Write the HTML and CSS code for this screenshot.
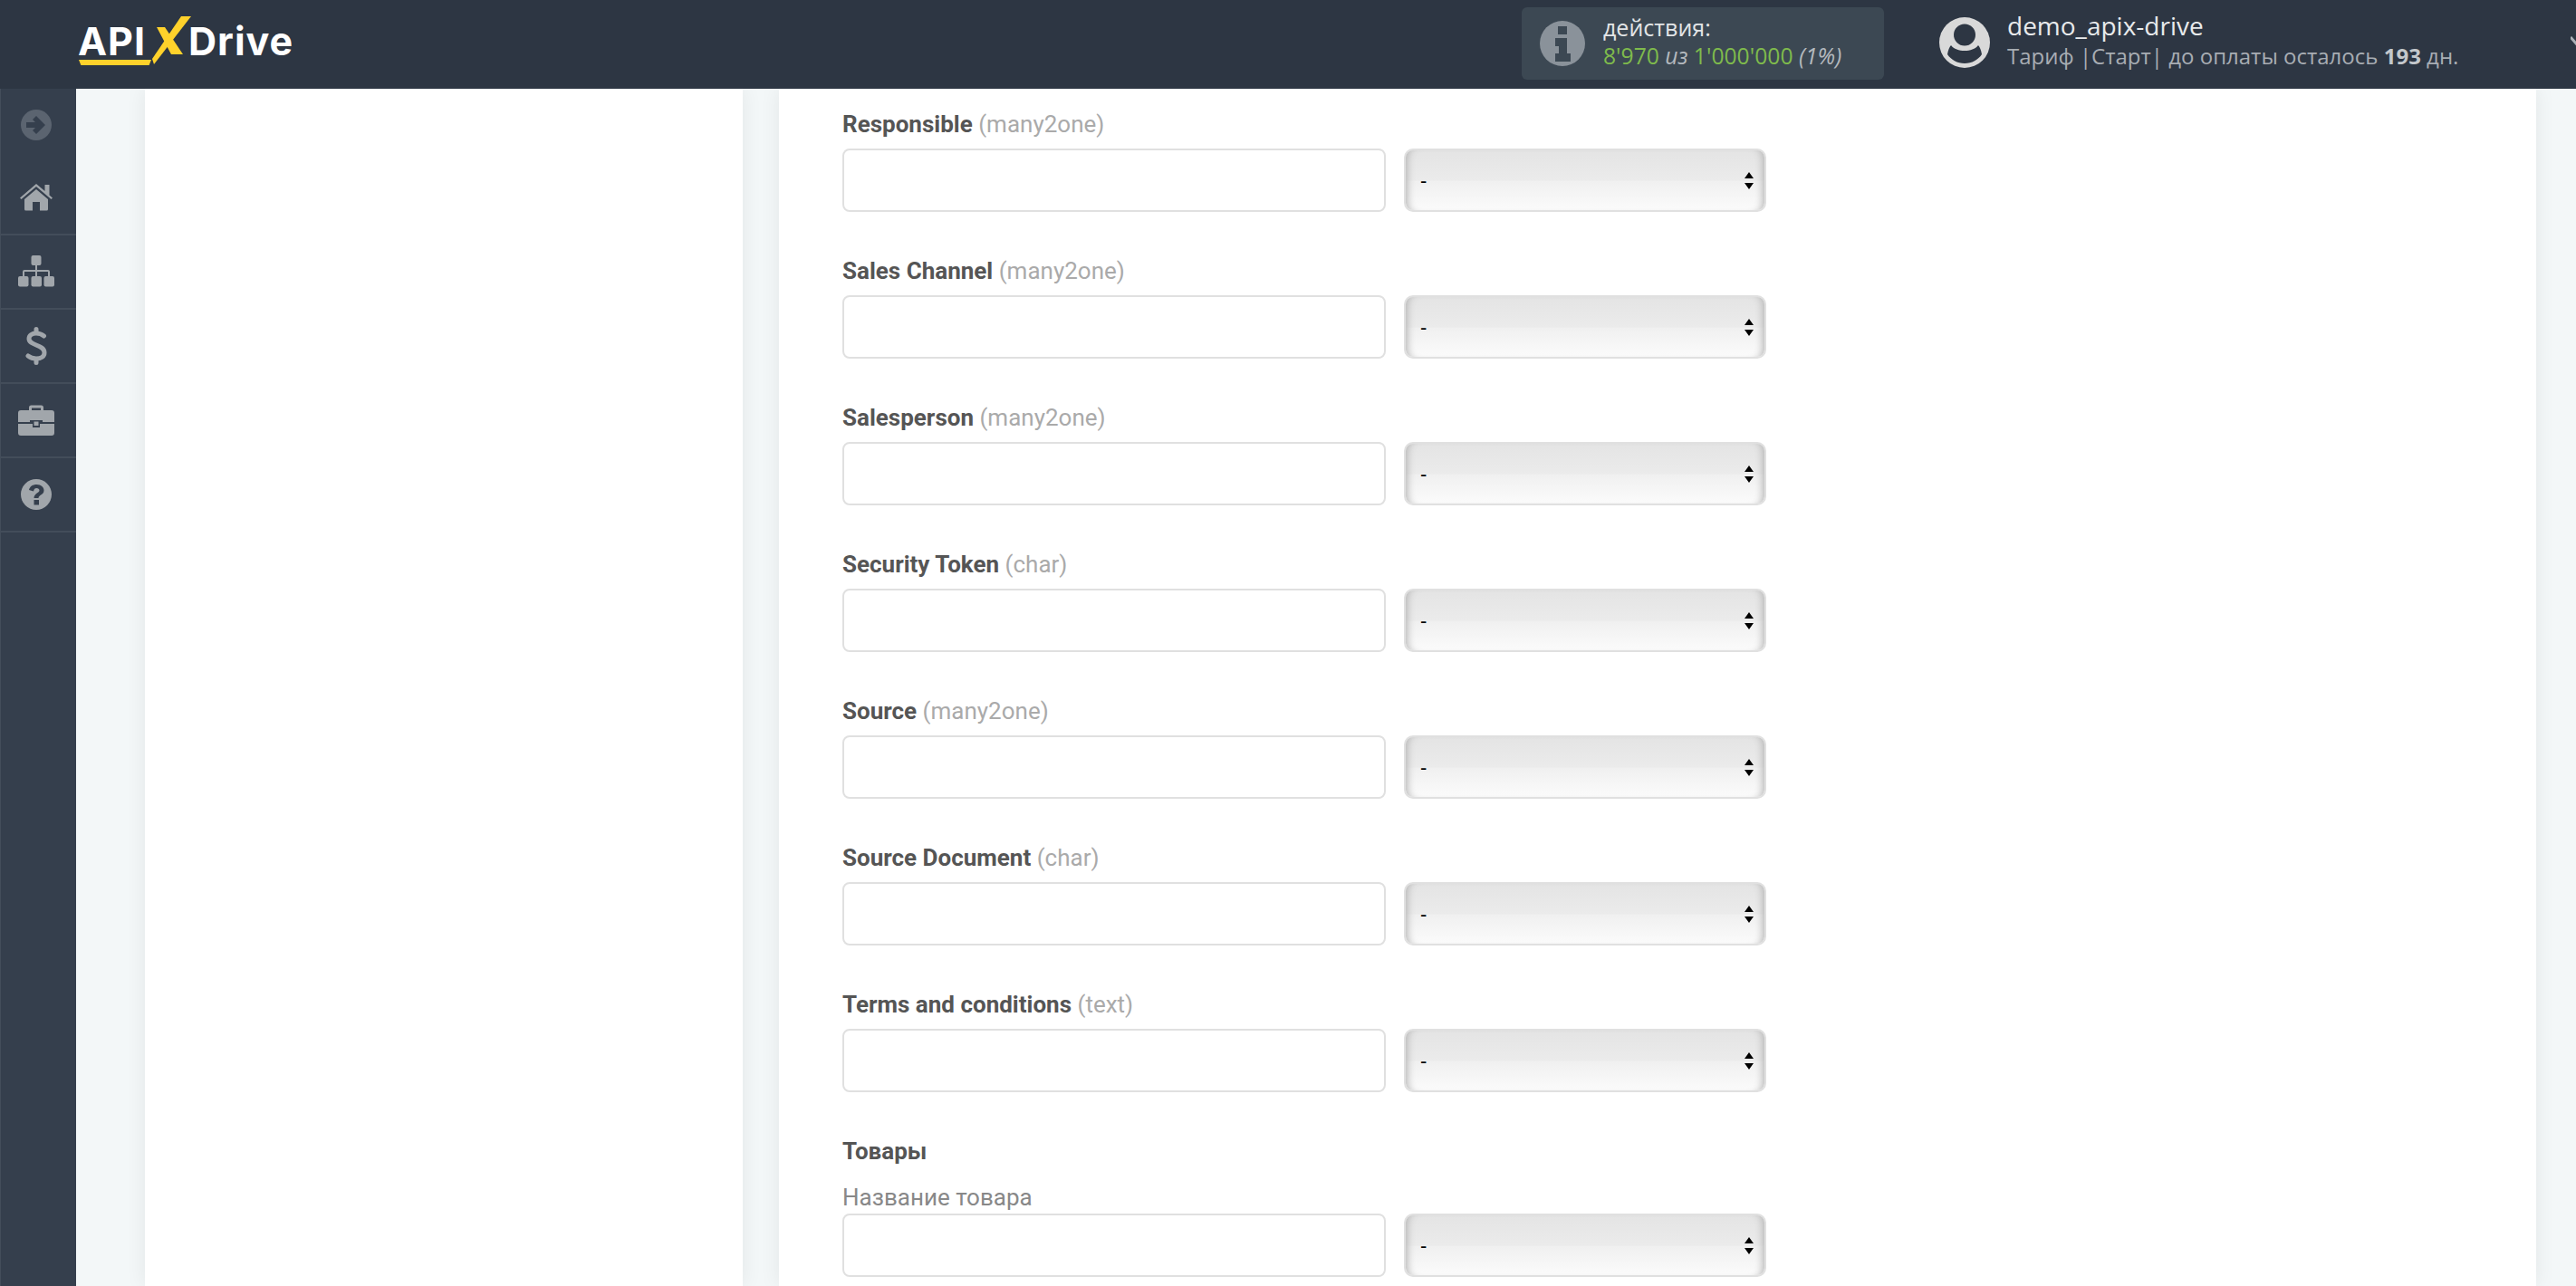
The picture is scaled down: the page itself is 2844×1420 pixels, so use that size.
FILE: index.html
```html
<!DOCTYPE html>
<html lang="ru">
<head>
<meta charset="utf-8">
<title>ApiX-Drive</title>
<link rel="stylesheet" href="styles.css">
</head>
<body>
<div class="app">
  <header class="topbar">
    <div class="logo">
      <span class="logo-api">API</span>
      <svg class="logo-x" viewBox="0 0 43 53"><path d="M43 0H32L0 47l2 6z" fill="#ffd22b"/><path d="M5 12h9l20 30H21z" fill="#ffd22b"/></svg>
      <span class="logo-drive">Drive</span>
      <span class="logo-line"></span>
    </div>
    <div class="actions">
      <svg class="info-icon" viewBox="0 0 50 50"><circle cx="25" cy="25" r="25" fill="#8a929a"/><path d="M20 6h10v9H20zM17 19h13v17h4v9H17v-9h4v-8h-4z" fill="#3c4853"/></svg>
      <div class="actions-text">
        <div class="actions-title">действия:</div>
        <div class="actions-count"><span class="green">8'970</span> <i>из</i> <span class="green">1'000'000</span> <i>(1%)</i></div>
      </div>
    </div>
    <div class="user">
      <svg class="user-icon" viewBox="0 0 56 56"><circle cx="28" cy="28" r="28" fill="#d9d9d9"/><circle cx="28" cy="19.500" r="12" fill="#2d3643"/><path d="M9 41c1-5 2-8 4-10 3 4 9 6 15 6s12-2 15-6c2 2 3 5 4 10-4 6-11 10-19 10S13 47 9 41z" fill="#2d3643"/></svg>
      <div class="user-text">
        <div class="user-name">demo_apix-drive</div>
        <div class="user-plan">Тариф |Старт| до оплаты осталось <b>193</b> дн.</div>
      </div>
    </div>
    <svg class="chevron" viewBox="0 0 12 12"><path d="M0 1l6 7 6-7" fill="none" stroke="#aab0b6" stroke-width="3"/></svg>
  </header>
  <div class="body">
    <nav class="sidebar">
      <div class="nav-top">
        <svg class="nav-icon dim" viewBox="0 0 34 34"><circle cx="17" cy="17" r="17" fill="#5b6470"/><path d="M6 14h10l-3-3 4-4 10 10-10 10-4-4 3-3H6z" fill="#353f4d"/></svg>
      </div>
      <div class="nav-item">
        <svg class="nav-icon home" viewBox="0 0 36 30"><path d="M18 0l9.500 8V1h5v11.500L36 15.500l-1.500 1.500L18 3 1.500 17 0 15.500z" fill="#a1a6ab"/><path d="M18 6l13 11v11a1.500 1.500 0 0 1-1.500 1.500H22V20h-8v9.500H6.500A1.500 1.500 0 0 1 5 28V17z" fill="#a1a6ab"/></svg>
      </div>
      <div class="nav-item">
        <svg class="nav-icon" viewBox="0 0 40 36"><g fill="#a1a6ab"><rect x="14.500" y="0" width="11" height="11" rx="2"/><rect x="0" y="23" width="11.500" height="11.500" rx="2"/><rect x="14.500" y="23" width="11.500" height="11.500" rx="2"/><rect x="28.500" y="23" width="11.500" height="11.500" rx="2"/><path d="M19 11h2v5h12a2 2 0 0 1 2 2v5h-2v-5H21v5h-2v-5H7v5H5v-5a2 2 0 0 1 2-2h12z"/></g></svg>
      </div>
      <div class="nav-item">
        <svg class="nav-icon dollar" viewBox="0 0 24 42"><path d="M20.500 10C18 8 15.500 7 12 7 7 7 4 9.500 4 13c0 8 17 6 17 15.500 0 4-3.500 6.500-9 6.500-3.500 0-6.500-1-9-3" fill="none" stroke="#a1a6ab" stroke-width="5" stroke-linecap="round"/><path d="M9.500 2.500a2.500 2.500 0 0 1 5 0V8h-5zM9.500 34h5v5.500a2.500 2.500 0 0 1-5 0z" fill="#a1a6ab"/></svg>
      </div>
      <div class="nav-item">
        <svg class="nav-icon" viewBox="0 0 40 34"><path d="M12 6V3a2.500 2.500 0 0 1 2.500-2.500h11A2.500 2.500 0 0 1 28 3v3h9a3 3 0 0 1 3 3v10H27v-2H13v2H0V9a3 3 0 0 1 3-3zm3 0h10V3.500H15zM0 21h16v4h8v-4h16v10a3 3 0 0 1-3 3H3a3 3 0 0 1-3-3zm17.500-2.500h5V23h-5z" fill="#a1a6ab" fill-rule="evenodd"/></svg>
      </div>
      <div class="nav-item">
        <svg class="nav-icon round" viewBox="0 0 34 34"><circle cx="17" cy="17" r="17" fill="#a1a6ab"/><path d="M9 12c1-4 4-6 8.500-6 5 0 8 3 8 6.500 0 5-6 5-6 8.500h-5c0-5 6-6 6-8.500 0-1.500-1.500-2.500-3-2.500-2 0-3 1-3.500 3.500zM14.500 23h5.500v5.500h-5.500z" fill="#353f4d"/></svg>
      </div>
    </nav>
    <main class="content">
      <aside class="panel-left"></aside>
      <section class="panel-main">
        <div class="row">
          <label class="field-label">Responsible <span>(many2one)</span></label>
          <div class="controls"><input class="text-input" type="text"><div class="select-box"><select class="select"><option>-</option></select><svg class="arrows" viewBox="0 0 10 20"><path d="M5 0l5 7H0zM0 12h10l-5 7z"/></svg></div></div>
        </div>
        <div class="row">
          <label class="field-label">Sales Channel <span>(many2one)</span></label>
          <div class="controls"><input class="text-input" type="text"><div class="select-box"><select class="select"><option>-</option></select><svg class="arrows" viewBox="0 0 10 20"><path d="M5 0l5 7H0zM0 12h10l-5 7z"/></svg></div></div>
        </div>
        <div class="row">
          <label class="field-label">Salesperson <span>(many2one)</span></label>
          <div class="controls"><input class="text-input" type="text"><div class="select-box"><select class="select"><option>-</option></select><svg class="arrows" viewBox="0 0 10 20"><path d="M5 0l5 7H0zM0 12h10l-5 7z"/></svg></div></div>
        </div>
        <div class="row">
          <label class="field-label">Security Token <span>(char)</span></label>
          <div class="controls"><input class="text-input" type="text"><div class="select-box"><select class="select"><option>-</option></select><svg class="arrows" viewBox="0 0 10 20"><path d="M5 0l5 7H0zM0 12h10l-5 7z"/></svg></div></div>
        </div>
        <div class="row">
          <label class="field-label">Source <span>(many2one)</span></label>
          <div class="controls"><input class="text-input" type="text"><div class="select-box"><select class="select"><option>-</option></select><svg class="arrows" viewBox="0 0 10 20"><path d="M5 0l5 7H0zM0 12h10l-5 7z"/></svg></div></div>
        </div>
        <div class="row">
          <label class="field-label">Source Document <span>(char)</span></label>
          <div class="controls"><input class="text-input" type="text"><div class="select-box"><select class="select"><option>-</option></select><svg class="arrows" viewBox="0 0 10 20"><path d="M5 0l5 7H0zM0 12h10l-5 7z"/></svg></div></div>
        </div>
        <div class="row">
          <label class="field-label">Terms and conditions <span>(text)</span></label>
          <div class="controls"><input class="text-input" type="text"><div class="select-box"><select class="select"><option>-</option></select><svg class="arrows" viewBox="0 0 10 20"><path d="M5 0l5 7H0zM0 12h10l-5 7z"/></svg></div></div>
        </div>
        <div class="group-title">Товары</div>
        <div class="row">
          <label class="sub-label">Название товара</label>
          <div class="controls"><input class="text-input" type="text"><div class="select-box"><select class="select"><option>-</option></select><svg class="arrows" viewBox="0 0 10 20"><path d="M5 0l5 7H0zM0 12h10l-5 7z"/></svg></div></div>
        </div>
      </section>
    </main>
  </div>
</div>
</body>
</html>
```
FILE: styles.css
```css
* { box-sizing: border-box; }
html, body { margin: 0; height: 100%; overflow: hidden; }
body { font-family: "Open Sans", "Noto Sans", sans-serif; background: #f3f7f8; }
.app { display: flex; flex-direction: column; height: 100vh; overflow: hidden; }

.topbar { position: relative; flex: 0 0 98px; height: 98px; display: flex; align-items: flex-start; background: #2d3643; color: #fff; }
.logo { position: relative; display: flex; align-items: flex-start; width: 1680px; padding: 0 0 0 86px; height: 98px; flex: none; }
.logo-api, .logo-drive { font-family: Inter, "Liberation Sans", sans-serif; font-weight: 700; font-size: 43px; line-height: 50px; margin-top: 20px; color: #fff; }
.logo-api { width: 82px; flex: none; letter-spacing: 1px; }
.logo-x { width: 43px; height: 53px; flex: none; margin-top: 18px; }
.logo-drive { margin-left: -3px; letter-spacing: 1px; }
.logo-line { position: absolute; left: 87px; top: 66px; width: 80px; height: 6px; background: #ffd22b; clip-path: polygon(0 0, 100% 0, 97% 100%, 3% 100%); }

.actions { margin-top: 8px; flex: none; width: 400px; height: 80px; display: flex; align-items: center; gap: 20px; padding-left: 20px; background: #3c4853; border-radius: 6px; }
.info-icon { width: 50px; height: 50px; flex: none; }
.actions-text { margin-top: -5px; }
.actions-title { font-size: 25px; line-height: 31px; color: #e3e5e7; }
.actions-count { font-size: 24.700px; line-height: 31px; color: #b4b9be; }
.green { color: #7fbb4c; }
.user { flex: none; margin-left: 61px; margin-top: 19px; display: flex; gap: 19px; align-items: flex-start; }
.user-icon { width: 56px; height: 56px; flex: none; }
.user-text { margin-top: -9px; }
.user-name { font-size: 28px; line-height: 36px; color: #e8eaec; }
.user-plan { font-size: 24px; line-height: 32px; color: #a8adb3; }
.user-plan b { font-weight: 700; color: #c4c8cc; }
.chevron { position: absolute; right: -6px; top: 40px; width: 12px; height: 12px; }

.body { flex: 1; display: flex; min-height: 0; }
.sidebar { flex: 0 0 84px; width: 84px; background: #353f4d; border-left: 1px solid #434d5a; display: flex; flex-direction: column; }
.nav-top { flex: 0 0 80px; display: flex; align-items: center; justify-content: center; padding-right: 5px; }
.nav-item { flex: 0 0 82px; height: 82px; display: flex; align-items: center; justify-content: center; padding-right: 5px; border-bottom: 2px solid #434d5a; }
.nav-icon { width: 40px; height: 36px; }
.nav-icon.dim, .nav-icon.round { width: 34px; height: 34px; }
.nav-icon.home { width: 36px; height: 30px; }
.nav-icon.dollar { width: 24px; height: 42px; }

.content { flex: 1; display: flex; padding: 0 44px 0 76px; gap: 40px; min-width: 0; }
.panel-left { flex: 0 0 660px; background: #fff; box-shadow: 0 0 22px rgba(0, 0, 0, .07); }
.panel-main { flex: 1; background: #fff; box-shadow: 0 0 22px rgba(0, 0, 0, .07); padding: 21px 0 0 70px; }

.row { margin-bottom: 47px; }
.field-label { display: block; font-family: Roboto, "Liberation Sans", sans-serif; font-weight: 700; font-size: 26px; line-height: 36px; color: #555; margin-bottom: 9px; }
.field-label span { font-weight: 400; color: #aaa; }
.group-title { font-family: Roboto, "Liberation Sans", sans-serif; font-weight: 700; font-size: 26px; line-height: 36px; color: #555; margin-bottom: 15px; }
.sub-label { display: block; font-family: Roboto, "Liberation Sans", sans-serif; font-size: 26px; line-height: 36px; color: #888; }
.controls { display: flex; gap: 20px; }
.text-input { width: 600px; height: 70px; padding: 0 16px; background: #fff; border: 2px solid #e0e0e0; border-radius: 8px; outline: none; }
.select-box { position: relative; width: 400px; height: 70px; }
.select { width: 100%; height: 100%; appearance: none; -webkit-appearance: none; padding: 0 0 0 16px; font-family: "Liberation Sans", sans-serif; font-size: 22px; color: #000; border: 2px solid #e0e0e0; border-radius: 10px; outline: none; background: linear-gradient(#e4e4e4 0%, #ebebeb 50%, #f0f0f0 52%, #fbfbfb 100%); box-shadow: inset 9px 0 8px -7px #b5b5b5, inset -9px 0 8px -7px #b5b5b5; }
.arrows { position: absolute; right: 14px; top: 26px; width: 10px; height: 20px; pointer-events: none; }
```
